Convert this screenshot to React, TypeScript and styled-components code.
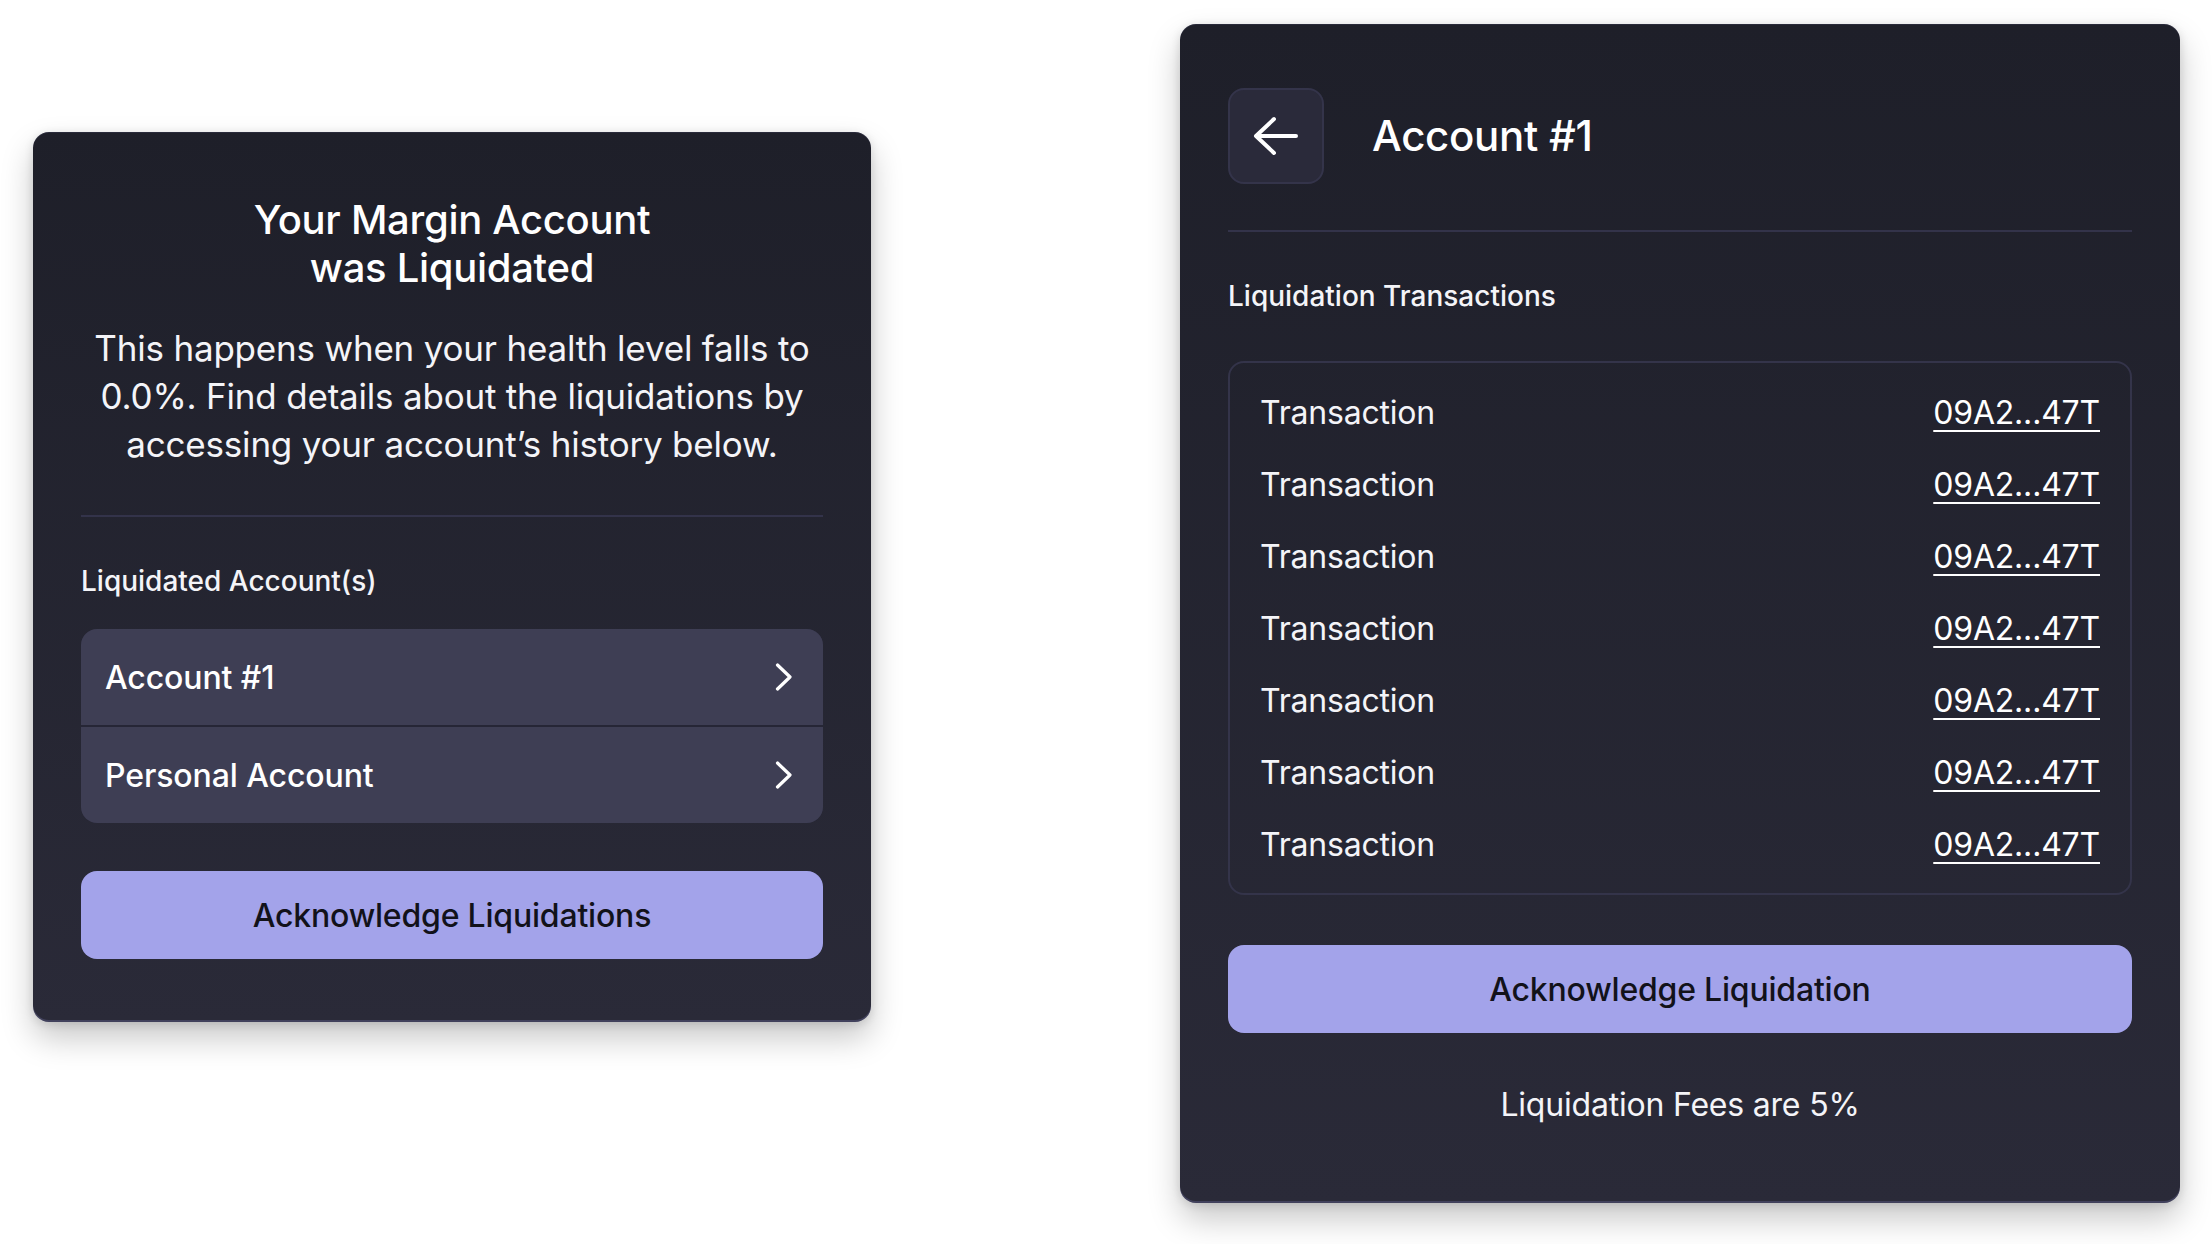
import React from "react";
import styled, { createGlobalStyle } from "styled-components";

const GlobalStyle = createGlobalStyle`
  html, body {
    margin: 0;
    padding: 0;
    background: #ffffff;
  }
  body {
    font-family: Inter, "Noto Sans", "Liberation Sans", sans-serif;
    color: #ffffff;
    -webkit-font-smoothing: antialiased;
  }
  * { box-sizing: border-box; }
`;

const Page = styled.div`
  width: 2212px;
  min-height: 1244px;
  display: flex;
  justify-content: space-between;
  align-items: flex-start;
  padding: 24px 32px 40px 33px;
`;

const Card = styled.section<{ $width: number; $top: number; $bottom: number }>`
  width: ${(p) => p.$width}px;
  margin-top: ${(p) => p.$top}px;
  padding: 64px 48px ${(p) => p.$bottom}px;
  border-radius: 16px;
  background: linear-gradient(180deg, #1e1f29 0%, #2a2a38 100%);
  box-shadow: inset 0 -2px 0 rgba(110, 110, 160, 0.35),
    inset 0 1px 0 rgba(110, 110, 160, 0.15),
    0 16px 32px rgba(0, 0, 0, 0.22), 0 2px 10px rgba(0, 0, 0, 0.12);
  display: flex;
  flex-direction: column;
`;

const Title = styled.h1`
  margin: 0;
  font-size: 40px;
  line-height: 48px;
  font-weight: 500;
  text-align: center;
  letter-spacing: -0.3px;
`;

const Body = styled.p`
  margin: 32px 0 0;
  font-size: 35px;
  line-height: 48px;
  font-weight: 400;
  text-align: center;
  color: #f4f4f8;
  letter-spacing: -0.2px;
`;

const Divider = styled.hr<{ $top: number }>`
  margin: ${(p) => p.$top}px 0 0;
  border: 0;
  height: 2px;
  background: #33334a;
`;

const Label = styled.div<{ $top: number }>`
  margin-top: ${(p) => p.$top}px;
  font-size: 28px;
  line-height: 36px;
  font-weight: 500;
  color: #f4f4f8;
`;

const AccountList = styled.div`
  margin-top: 30px;
  border-radius: 16px;
  overflow: hidden;
  display: flex;
  flex-direction: column;
  gap: 2px;
  background: #262636;
`;

const AccountRow = styled.div`
  height: 96px;
  display: flex;
  align-items: center;
  justify-content: space-between;
  padding: 0 30px 0 24px;
  background: #3e3e54;
  font-size: 32px;
  font-weight: 500;
  letter-spacing: -0.1px;
`;

const PrimaryButton = styled.button<{ $top: number }>`
  margin-top: ${(p) => p.$top}px;
  height: 88px;
  width: 100%;
  border: 0;
  border-radius: 16px;
  background: #a3a3ea;
  color: #12121a;
  font-family: inherit;
  font-size: 32px;
  font-weight: 500;
  letter-spacing: -0.2px;
  cursor: pointer;
`;

const Header = styled.div`
  display: flex;
  align-items: center;
  gap: 48px;
`;

const BackButton = styled.button`
  width: 96px;
  height: 96px;
  border-radius: 16px;
  background: #2a2a3a;
  border: 2px solid #34344a;
  display: flex;
  align-items: center;
  justify-content: center;
  padding: 0;
  cursor: pointer;
`;

const HeaderTitle = styled.h2`
  margin: 0;
  font-size: 42px;
  font-weight: 500;
  line-height: 48px;
  letter-spacing: -0.3px;
`;

const TxBox = styled.div`
  margin-top: 47px;
  border: 2px solid #34344a;
  border-radius: 16px;
  padding: 13px 30px;
  display: flex;
  flex-direction: column;
`;

const TxRow = styled.div`
  height: 72px;
  display: flex;
  align-items: center;
  justify-content: space-between;
  font-size: 32px;
  font-weight: 400;
  color: #f4f4f8;
  letter-spacing: -0.2px;
`;

const TxHash = styled.a`
  color: #ffffff;
  text-decoration: underline;
  text-decoration-thickness: 2px;
  text-underline-offset: 6px;
`;

const Fees = styled.p`
  margin: 48px 0 0;
  font-size: 32px;
  line-height: 48px;
  text-align: center;
  color: #f4f4f8;
  letter-spacing: -0.2px;
`;

const Chevron = () => (
  <svg width="18" height="28" viewBox="0 0 18 28" fill="none">
    <path
      d="M2.5 2 L15 14 L2.5 26"
      stroke="#ffffff"
      strokeWidth="3.2"
      strokeLinecap="round"
      strokeLinejoin="round"
    />
  </svg>
);

const ArrowLeft = () => (
  <svg width="46" height="40" viewBox="0 0 46 40" fill="none">
    <path
      d="M3 20 H43 M21 3 L3 20 L21 37"
      stroke="#ffffff"
      strokeWidth="4"
      strokeLinecap="round"
      strokeLinejoin="round"
    />
  </svg>
);

const accounts = ["Account #1", "Personal Account"];
const txs = Array.from({ length: 7 }, () => "09A2...47T");

export default function App() {
  return (
    <>
      <GlobalStyle />
      <Page>
        <Card $width={838} $top={108} $bottom={63}>
          <Title>
            Your Margin Account
            <br />
            was Liquidated
          </Title>
          <Body>
            This happens when your health level falls to 0.0%. Find details
            about the liquidations by accessing your account’s history below.
          </Body>
          <Divider $top={47} />
          <Label $top={46}>Liquidated Account(s)</Label>
          <AccountList>
            {accounts.map((a) => (
              <AccountRow key={a}>
                <span>{a}</span>
                <Chevron />
              </AccountRow>
            ))}
          </AccountList>
          <PrimaryButton $top={48}>Acknowledge Liquidations</PrimaryButton>
        </Card>

        <Card $width={1000} $top={0} $bottom={74}>
          <Header>
            <BackButton aria-label="Back">
              <ArrowLeft />
            </BackButton>
            <HeaderTitle>Account #1</HeaderTitle>
          </Header>
          <Divider $top={46} />
          <Label $top={46}>Liquidation Transactions</Label>
          <TxBox>
            {txs.map((h, i) => (
              <TxRow key={i}>
                <span>Transaction</span>
                <TxHash href="#">{h}</TxHash>
              </TxRow>
            ))}
          </TxBox>
          <PrimaryButton $top={50}>Acknowledge Liquidation</PrimaryButton>
          <Fees>Liquidation Fees are 5%</Fees>
        </Card>
      </Page>
    </>
  );
}
